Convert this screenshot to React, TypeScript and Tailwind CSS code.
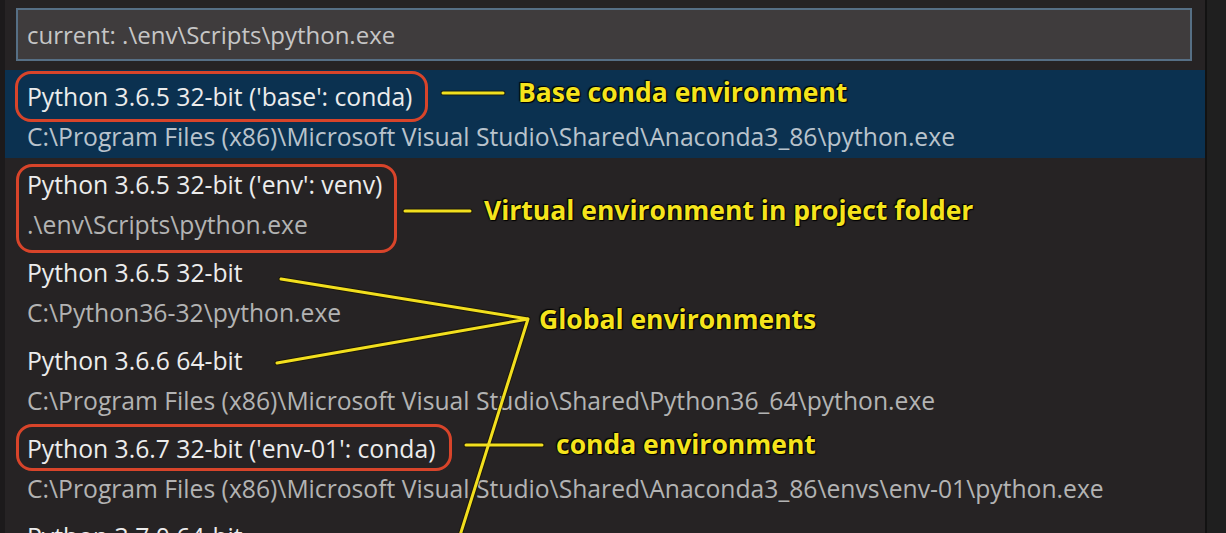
const items = [
  { title: "Python 3.6.5 32-bit ('base': conda)", path: 'C:\\Program Files (x86)\\Microsoft Visual Studio\\Shared\\Anaconda3_86\\python.exe', selected: true },
  { title: "Python 3.6.5 32-bit ('env': venv)", path: '.\\env\\Scripts\\python.exe' },
  { title: 'Python 3.6.5 32-bit', path: 'C:\\Python36-32\\python.exe' },
  { title: 'Python 3.6.6 64-bit', path: 'C:\\Program Files (x86)\\Microsoft Visual Studio\\Shared\\Python36_64\\python.exe' },
  { title: "Python 3.6.7 32-bit ('env-01': conda)", path: 'C:\\Program Files (x86)\\Microsoft Visual Studio\\Shared\\Anaconda3_86\\envs\\env-01\\python.exe' },
  { title: 'Python 3.7.0 64-bit', path: 'C:\\Python37\\python.exe' },
];

const LABEL =
  'absolute font-bold text-[26.5px] leading-none text-[#f5e41c] [font-family:"Open_Sans",sans-serif] [text-shadow:0_0_2px_#000,1px_1px_1px_#000,-1px_-1px_1px_#000]';

function Annotations() {
  return (
    <div className="pointer-events-none absolute inset-0">
      {/* red outlines */}
      <div className="absolute left-[15px] top-[71px] h-[51px] w-[413px] rounded-[16px] border-[3px] border-[#d8442a]" />
      <div className="absolute left-[16px] top-[164px] h-[89px] w-[381px] rounded-[16px] border-[3px] border-[#d8442a]" />
      <div className="absolute left-[16px] top-[424px] h-[47px] w-[436px] rounded-[16px] border-[3px] border-[#d8442a]" />

      {/* yellow leader lines */}
      <svg className="absolute inset-0" width="1226" height="533">
        <g stroke="#1a1400" strokeWidth="5" strokeLinecap="round" fill="none" opacity="0.7">
          <line x1="443" y1="93" x2="503" y2="93" />
          <line x1="405" y1="211" x2="470" y2="211" />
          <line x1="466" y1="445" x2="542" y2="445" />
          <polyline points="281,279 528,319 277,363" />
          <line x1="528" y1="319" x2="457" y2="545" />
        </g>
        <g stroke="#f2df1e" strokeWidth="3" strokeLinecap="round" fill="none">
          <line x1="443" y1="93" x2="503" y2="93" />
          <line x1="405" y1="211" x2="470" y2="211" />
          <line x1="466" y1="445" x2="542" y2="445" />
          <polyline points="281,279 528,319 277,363" />
          <line x1="528" y1="319" x2="457" y2="545" />
        </g>
      </svg>

      <span className={`${LABEL} left-[518px] top-[79px]`}>Base conda environment</span>
      <span className={`${LABEL} left-[484px] top-[197px]`}>Virtual environment in project folder</span>
      <span className={`${LABEL} left-[539px] top-[306px]`}>Global environments</span>
      <span className={`${LABEL} left-[556px] top-[431px]`}>conda environment</span>
    </div>
  );
}

export default function App() {
  return (
    <div className="relative flex h-[533px] w-[1226px] overflow-hidden bg-[#1d1b1c] [font-family:'Open_Sans',sans-serif]">
      <div className="w-[5px] shrink-0 bg-[#1c1a1b]" />

      <div className="flex w-[1200px] shrink-0 flex-col overflow-hidden bg-[#262324]">
        <div className="mt-[8px] ml-[11px] mr-[13px] flex h-[53px] shrink-0 items-center border-2 border-[#566f85] bg-[#3f3c3d] px-[9px]">
          <span className="text-[24px] text-[#c6c6c6]">current: .\env\Scripts\python.exe</span>
        </div>

        <div className="mt-[9px] flex shrink-0 flex-col">
          {items.map((it, i) => (
            <div
              key={i}
              className={`flex h-[88px] shrink-0 flex-col pt-[7px] pl-[22px] ${it.selected ? 'bg-[#0b3150]' : ''}`}
            >
              <div className="h-[40px] whitespace-nowrap text-[24.7px] leading-[40px] text-[#ececec]">{it.title}</div>
              <div className={`h-[40px] whitespace-nowrap text-[24.7px] leading-[40px] ${it.selected ? 'text-[#b9c3cc]' : 'text-[#b3b3b3]'}`}>
                {it.path}
              </div>
            </div>
          ))}
        </div>
      </div>

      <div className="w-[2px] shrink-0 bg-[#121212]" />
      <div className="flex-1 bg-[#1f1f1f]" />

      <Annotations />
    </div>
  );
}
